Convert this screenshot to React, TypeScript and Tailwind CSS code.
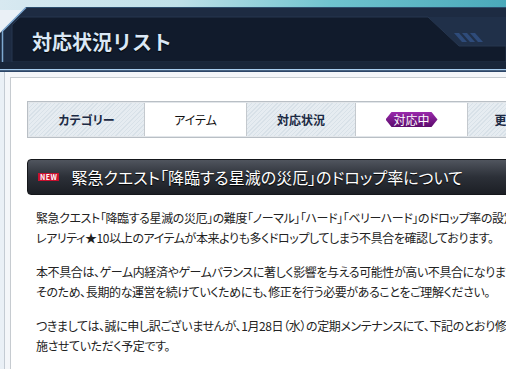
import React from "react"

const tabs = [
    { label: "カテゴリー", width: "w-[116px]", head: true },
    { label: "アイテム", width: "w-[102px]", head: false },
    { label: "対応状況", width: "w-[109px]", head: true },
    { label: "対応中", width: "w-[112px]", head: false, badge: true },
    { label: "更新日", width: "w-[90px]", head: true },
]

const paragraphs = [
    [
        "緊急クエスト「降臨する星滅の災厄」の難度「ノーマル」「ハード」「ベリーハード」のドロップ率の設定において、",
        "レアリティ★10以上のアイテムが本来よりも多くドロップしてしまう不具合を確認しております。",
    ],
    [
        "本不具合は、ゲーム内経済やゲームバランスに著しく影響を与える可能性が高い不具合になります。",
        "そのため、長期的な運営を続けていくためにも、修正を行う必要があることをご理解ください。",
    ],
    [
        "つきましては、誠に申し訳ございませんが、1月28日（水）の定期メンテナンスにて、下記のとおり修正を実",
        "施させていただく予定です。",
    ],
]

function HeaderFrame() {
    return (
        <svg className="absolute inset-0" width="506" height="72" viewBox="0 0 506 72">
            <defs>
                <linearGradient id="sky" x1="0" y1="0" x2="1" y2="0">
                    <stop offset="0" stopColor="#d8e9f1" />
                    <stop offset="0.35" stopColor="#bfe0e8" />
                    <stop offset="0.65" stopColor="#70c4cf" />
                    <stop offset="1" stopColor="#4aa9ba" />
                </linearGradient>
            </defs>
            <rect x="0" y="0" width="506" height="10" fill="url(#sky)" />
            <polygon points="26,7 506,7 506,72 0,72 0,33" fill="#1d2b42" />
            <line x1="26" y1="7.5" x2="506" y2="7.5" stroke="#2b4d6c" />
            <polyline points="26,7.5 2.5,31 2.5,69" fill="none" stroke="#7ea8d0" strokeWidth="1.5" />
            <polygon points="428,17 506,17 506,46 459,46" fill="#203049" />
            <polygon points="20,17 428,17 459,46 506,46 506,62 12,62 12,25" fill="#111b2c" stroke="#26364f" />
            <polygon points="454,33 459,33 467,42 462,42" fill="#2e4b7a" />
            <polygon points="462,33 467,33 475,42 470,42" fill="#2e4b7a" />
            <polygon points="470,33 475,33 483,42 478,42" fill="#2e4b7a" />
            <rect x="0" y="62" width="506" height="7" fill="#19263a" />
            <rect x="0" y="69" width="506" height="1.5" fill="#a8cdef" />
            <rect x="0" y="70.5" width="506" height="1.5" fill="#2c4668" />
        </svg>
    )
}

export default function App() {
    return (
        <div className="w-[506px] h-[369px] overflow-hidden bg-[#eaf0f6] [font-family:'Noto_Sans_CJK_JP','Noto_Sans',sans-serif]">
            <header className="relative h-[72px]">
                <HeaderFrame />
                <h1 className="relative pt-[28px] pl-[32px] text-[20px] leading-[28px] font-bold text-[#dbe8f6] [text-shadow:0_1px_1px_#000]">
                    対応状況リスト
                </h1>
            </header>

            <div className="pl-[4px] bg-[#eaf0f6]">
                <div className="border-l border-[#c4cbd3] bg-[#f4f6f9] pl-[5px] pt-[5px]">
                    <div className="h-[300px] border-l border-t border-[#c6cbd0] bg-white pl-[16px] pt-[23px]">
                        <div className="w-[600px] border border-[#b9bfc5]">
                            <div className="flex h-[35px] border border-[#e2e6ea]">
                                {tabs.map((t) => (
                                    <div
                                        key={t.label}
                                        className={`${t.width} shrink-0 flex items-center justify-center border-r border-[#c4c9ce] text-[12px] ${
                                            t.head
                                                ? "font-bold text-[#1c2a44] bg-[repeating-linear-gradient(135deg,#d8e1e8_0px,#d8e1e8_1px,#e6ecf1_1px,#e6ecf1_3px)]"
                                                : "text-[#111] bg-white"
                                        }`}
                                    >
                                        {t.badge ? (
                                            <span className="flex items-center justify-center w-[52px] h-[15px] text-white text-[12px] leading-none bg-gradient-to-b from-[#9a2aac] to-[#5c0a6c] [clip-path:polygon(6px_0,calc(100%_-_6px)_0,100%_50%,calc(100%_-_6px)_100%,6px_100%,0_50%)]">
                                                {t.label}
                                            </span>
                                        ) : (
                                            <span className="[font-feature-settings:'palt']">{t.label}</span>
                                        )}
                                    </div>
                                ))}
                            </div>
                        </div>

                        <div className="mt-[21px] w-[520px] h-[36px] flex items-center pl-[10px] rounded-[4px] border border-[#15171b] bg-gradient-to-b from-[#50555e] via-[#2c3038] to-[#1c1f25]">
                            <span className="px-[2px] h-[8px] flex items-center bg-[#c8102e] text-white text-[7px] font-bold leading-none tracking-[0.5px]">
                                NEW
                            </span>
                            <h2 className="ml-[12px] text-[16px] whitespace-nowrap text-white [font-feature-settings:'palt'] [text-shadow:0_1px_1px_#000]">
                                緊急クエスト「降臨する星滅の災厄」のドロップ率について
                            </h2>
                        </div>

                        <div className="mt-[13px] pl-[9px] text-[12px] leading-[20px] tracking-[-0.4px] text-[#222] [font-feature-settings:'palt']">
                            {paragraphs.map((p, i) => (
                                <div key={i} className="mb-[14px]">
                                    {p.map((line) => (
                                        <p key={line} className="whitespace-nowrap">{line}</p>
                                    ))}
                                </div>
                            ))}
                        </div>
                    </div>
                </div>
            </div>
        </div>
    )
}
